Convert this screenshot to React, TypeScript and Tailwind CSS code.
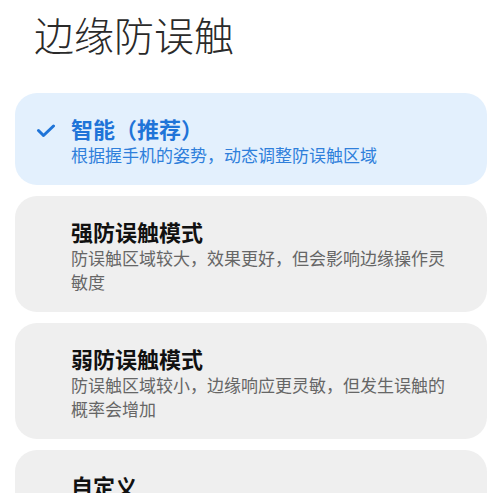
import React from "react";

const font = { fontFamily: '"Noto Sans CJK SC", "Noto Sans", sans-serif' };

function Check() {
  return (
    <svg width="20" height="14" viewBox="0 0 20 14" fill="none" className="block">
      <path d="M2.5 6.5 L7.5 11.5 L17.5 2" stroke="#1f74d8" strokeWidth="3" strokeLinecap="round" strokeLinejoin="round" />
    </svg>
  );
}

type Item = { title: string; desc: string; selected?: boolean };

const items: Item[] = [
  { title: "智能（推荐）", desc: "根据握手机的姿势，动态调整防误触区域", selected: true },
  { title: "强防误触模式", desc: "防误触区域较大，效果更好，但会影响边缘操作灵敏度" },
  { title: "弱防误触模式", desc: "防误触区域较小，边缘响应更灵敏，但发生误触的概率会增加" },
  { title: "自定义", desc: "手动设置防误触区域的大小" },
];

export default function App() {
  return (
    <div className="w-[500px] h-[493px] overflow-hidden bg-white" style={font}>
      <div className="pl-[34px] pt-[10px] h-[93px]">
        <div className="text-[40px] leading-[48px] font-light text-[#2a2a2a]">边缘防误触</div>
      </div>
      <div className="ml-[15px] mr-[13px] flex flex-col gap-[11px]">
        {items.map((it) => (
          <div
            key={it.title}
            className={
              it.selected
                ? "relative rounded-[22px] bg-[#e3f0fd] pl-[56px] pr-[22px] pt-[20px] pb-[18px]"
                : "relative rounded-[22px] bg-[#efefef] pl-[56px] pr-[22px] pt-[20px] pb-[18px]"
            }
          >
            {it.selected && (
              <div className="absolute left-[21px] top-[31px]">
                <Check />
              </div>
            )}
            <div
              className={
                it.selected
                  ? "text-[22px] leading-[30px] font-bold text-[#1f74d8]"
                  : "text-[22px] leading-[30px] font-bold text-[#111111]"
              }
            >
              {it.title}
            </div>
            <div
              className={
                it.selected
                  ? "text-[17px] leading-[24px] text-[#2f7fdb] w-[385px]"
                  : "text-[17px] leading-[24px] text-[#666666] w-[385px]"
              }
            >
              {it.desc}
            </div>
          </div>
        ))}
      </div>
    </div>
  );
}
